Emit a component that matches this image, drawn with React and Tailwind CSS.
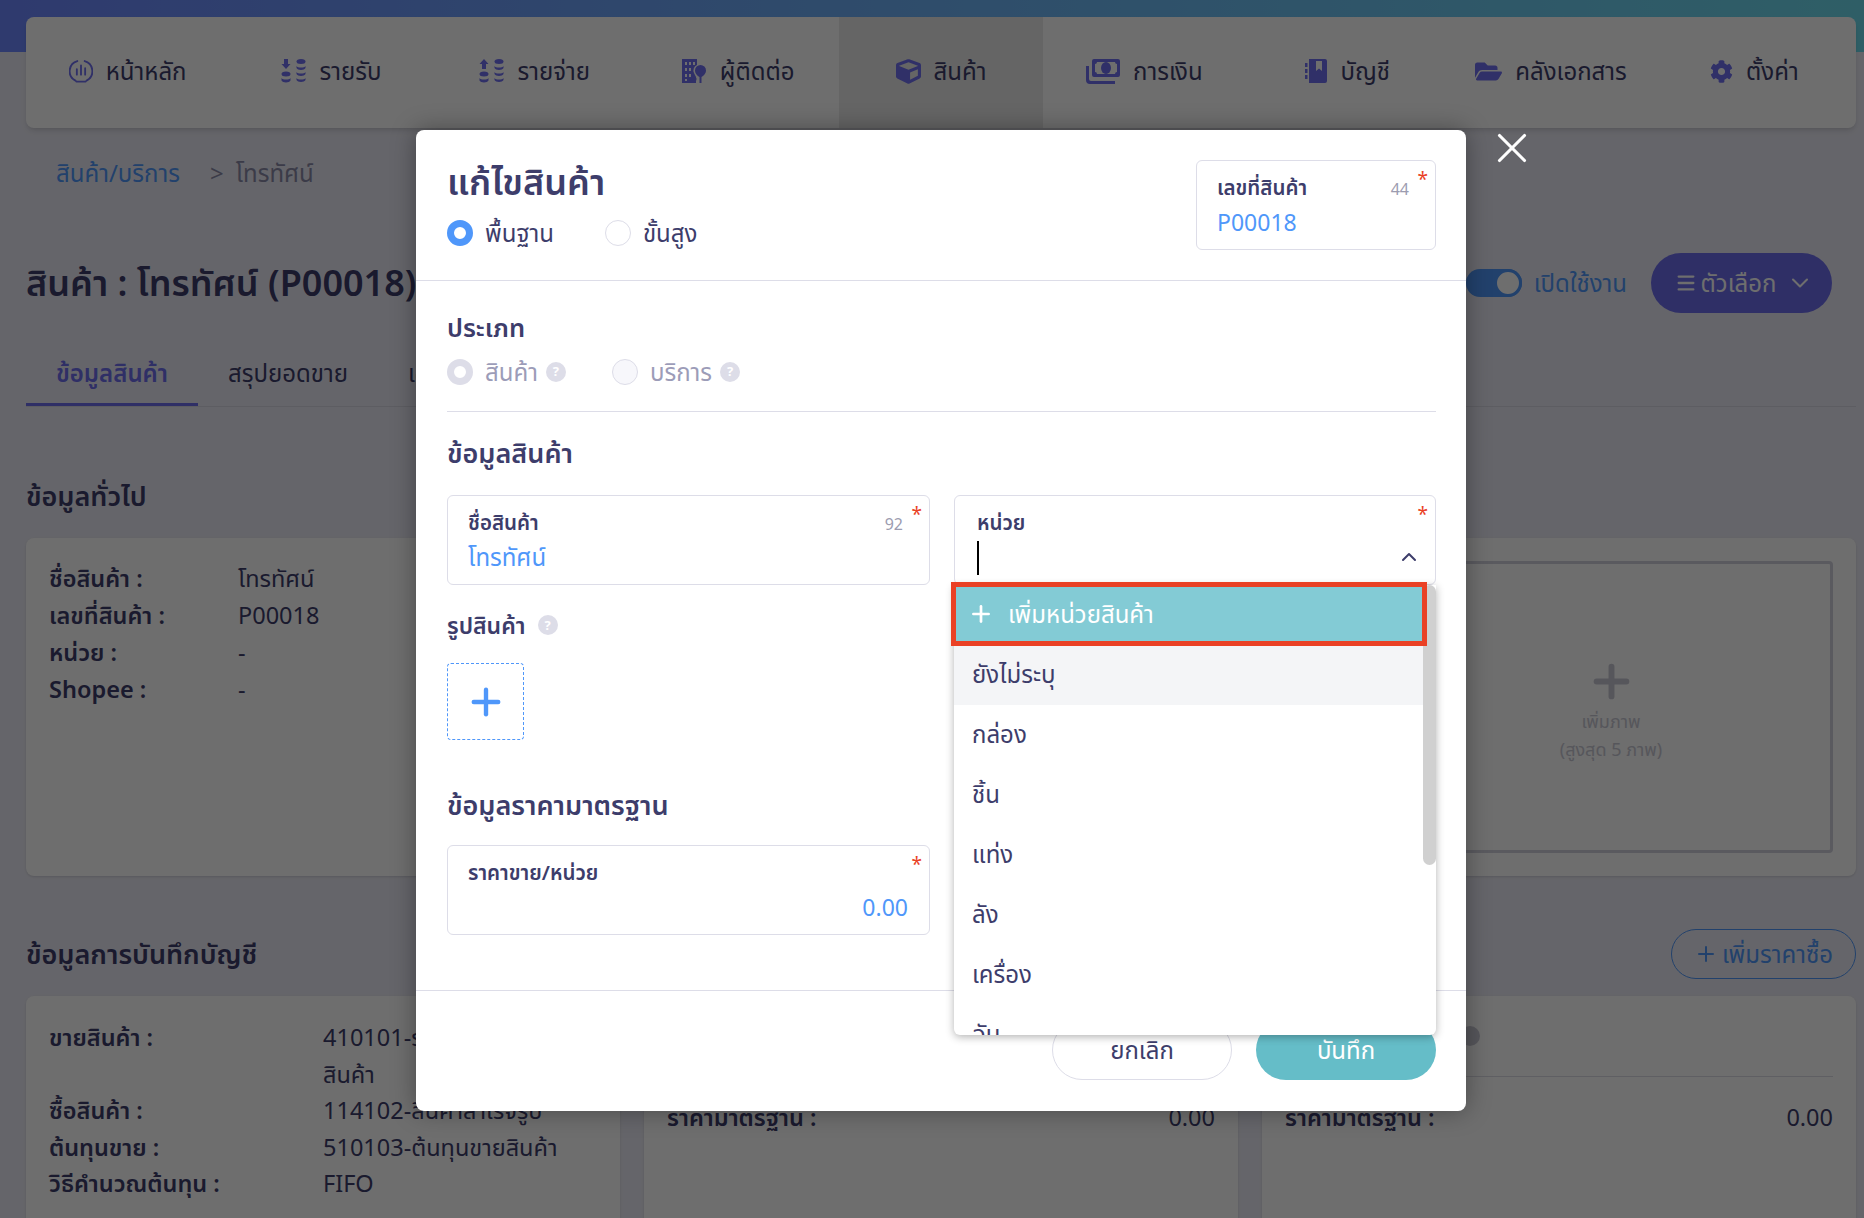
import React from 'react';
import { ChevronDown, ChevronUp, Plus, X, Menu } from 'lucide-react';
import { FaCube, FaCog, FaFolderOpen } from 'react-icons/fa';

const FONT = "font-['Noto_Sans','Noto_Sans_Thai',Inter,sans-serif]";

function HomeIcon() {
  return (
    <svg width="24" height="26" viewBox="0 0 26 26" fill="none" stroke="currentColor" strokeWidth="2" strokeLinecap="round">
      <path d="M7 23.5A11.5 11.5 0 0 1 9 2.2M17 2.2a11.5 11.5 0 0 1 2 21.3M8 24.5h10" />
      <path d="M8.5 11v6M13 7v10M17.5 10v7" />
    </svg>
  );
}

function CoinsIcon({ up }) {
  return (
    <svg width="26" height="26" viewBox="0 0 26 26" fill="currentColor">
      <path d={up ? 'M5 1l4.5 5H7v5H3V6H.5z' : 'M3 1h4v5h2.5L5 11 .5 6H3z'} />
      <ellipse cx="5" cy="16" rx="4.5" ry="2.5" />
      <path d="M.5 20c1 2 8 2 9 0v2.5c-1 2.5-8 2.5-9 0z" />
      <ellipse cx="20" cy="3.5" rx="4.5" ry="2.5" />
      <path d="M15.5 8c1 2 8 2 9 0v2c-1 2.5-8 2.5-9 0zM15.5 14c1 2 8 2 9 0v2c-1 2.5-8 2.5-9 0zM15.5 20c1 2 8 2 9 0v2c-1 2.5-8 2.5-9 0z" />
    </svg>
  );
}

function ContactIcon() {
  return (
    <svg width="26" height="26" viewBox="0 0 26 26" fill="currentColor">
      <path fillRule="evenodd" d="M1 1h15v6a6 6 0 0 0-3 8l2 4v6H1zM4 4v3h2V4zm4 0v3h2V4zm4 0v3h2V4zM4 10v3h2v-3zm4 0v3h2v-3zM4 16v3h2v-3zm4 0v3h2v-3zM4 21v2h2v-2z" />
      <path d="M19.5 7a5.5 5.5 0 0 1 5.5 5.5c0 3-2.5 5.5-4.500 6.500V25h-2v-6c-2-1-4.500-3.500-4.500-6.500A5.500 5.500 0 0 1 19.500 7z" />
      <circle cx="13" cy="21" r="2.500" />
    </svg>
  );
}

function MoneyIcon() {
  return (
    <svg width="34" height="26" viewBox="0 0 34 26" fill="currentColor">
      <path fillRule="evenodd" d="M8 1h24a2 2 0 0 1 2 2v14a2 2 0 0 1-2 2H8a2 2 0 0 1-2-2V3a2 2 0 0 1 2-2zm3 3a2 2 0 0 1-2 2v8a2 2 0 0 1 2 2h18a2 2 0 0 1 2-2V6a2 2 0 0 1-2-2z" />
      <ellipse cx="20" cy="10" rx="5" ry="6" />
      <path d="M0 8h3v13a2 2 0 0 0 2 2h24v3H4a4 4 0 0 1-4-4z" />
    </svg>
  );
}

function BookIcon() {
  return (
    <svg width="22" height="26" viewBox="0 0 22 26" fill="currentColor">
      <path fillRule="evenodd" d="M4 1h16a2 2 0 0 1 2 2v20a2 2 0 0 1-2 2H4zm7 2v10l3-2.500 3 2.500V3z" />
      <path d="M0 5h2.500v4H0zM0 11h2.500v4H0zM0 17h2.500v4H0z" />
    </svg>
  );
}

const NAV = [
  { label: 'หน้าหลัก', icon: <HomeIcon /> },
  { label: 'รายรับ', icon: <CoinsIcon /> },
  { label: 'รายจ่าย', icon: <CoinsIcon up /> },
  { label: 'ผู้ติดต่อ', icon: <ContactIcon /> },
  { label: 'สินค้า', icon: <FaCube size={25} />, active: true },
  { label: 'การเงิน', icon: <MoneyIcon /> },
  { label: 'บัญชี', icon: <BookIcon /> },
  { label: 'คลังเอกสาร', icon: <FaFolderOpen size={27} /> },
  { label: 'ตั้งค่า', icon: <FaCog size={23} /> },
];

const UNITS = ['กล่อง', 'ชิ้น', 'แท่ง', 'ลัง', 'เครื่อง', 'อัน'];

function Info({ rows, labelWidth, leading = 'leading-[37px]' }) {
  return (
    <div className={`text-[23.5px] ${leading}`}>
      {rows.map(([label, value]) => (
        <div key={label} className="flex">
          <div className="font-semibold shrink-0 text-[#3d3d6b]" style={{ width: labelWidth }}>{label}</div>
          <div className="text-[#3d3d6b]">{value}</div>
        </div>
      ))}
    </div>
  );
}

function Help({ className = '' }) {
  return (
    <span className={`inline-flex w-5 h-5 rounded-full bg-[#dddde8] text-white text-[13px] font-bold items-center justify-center ${className}`}>?</span>
  );
}

function Radio({ checked, disabled, label, help, className = '' }) {
  let ring = 'border border-[#dddde8] bg-white';
  if (checked) ring = 'border-[7px] border-[#4f97fa] bg-white';
  if (checked && disabled) ring = 'border-[7px] border-[#dddde8] bg-white';
  if (!checked && disabled) ring = 'border border-[#dddde8] bg-[#f7f7fb]';
  return (
    <div className={`flex items-center ${className}`}>
      <span className={`w-[26px] h-[26px] rounded-full ${ring}`} />
      <span className={`ml-3 text-[24px] leading-8 ${disabled ? 'text-[#9c9cb8]' : 'text-[#3d3d6b]'}`}>{label}</span>
      {help && <Help className="ml-2" />}
    </div>
  );
}

function Star() {
  return <span className="absolute top-[6px] right-[7px] text-[#ea4125] text-[19px] leading-6">*</span>;
}

function Field({ label, count, pad = 'px-5', className = '', children }) {
  return (
    <div className={`relative h-[90px] border border-[#dddde8] rounded-md pt-[14px] ${pad} ${className}`}>
      <Star />
      {count && <span className="absolute top-[16px] right-[26px] text-[16px] leading-6 text-[#9c9cb0]">{count}</span>}
      <div className="text-[20.5px] leading-6 font-semibold text-[#3d3d6b]">{label}</div>
      {children}
    </div>
  );
}

function Page() {
  return (
    <div className="h-full bg-[#ebebf5] text-[#3d3d6b]">
      <div className="h-[52px] bg-gradient-to-r from-[#6d87ff] to-[#6ddbed]" />
      <div className="ml-[26px] mr-[8px]">
        <div className="-mt-[35px] h-[111px] bg-white rounded-lg shadow-md grid grid-cols-9 overflow-hidden">
          {NAV.map(item => (
            <div key={item.label} className={`flex justify-center items-start pt-[38px] gap-[13px] ${item.active ? 'bg-[#e9e9e9]' : ''}`}>
              <span className="text-[#7070f0] h-[32px] flex items-center">{item.icon}</span>
              <span className="text-[24px] leading-8 whitespace-nowrap">{item.label}</span>
            </div>
          ))}
        </div>

        <div className="mt-[30px] pl-[30px] text-[24px] leading-[30px] flex">
          <span className="text-[#4f97fa]">สินค้า/บริการ</span>
          <span className="ml-[30px] text-[#8a8aa8]">{'>'}</span>
          <span className="ml-[12px] text-[#8a8aa8]">โทรทัศน์</span>
        </div>

        <div className="mt-[65px] h-[60px] flex items-center">
          <h1 className="text-[36px] font-semibold">สินค้า : โทรทัศน์ (P00018)</h1>
          <div className="ml-auto mr-[24px] flex items-center">
            <span className="w-[56px] h-[28px] rounded-full bg-[#4f97fa] flex justify-end">
              <span className="w-[28px] h-[28px] rounded-full bg-white border-[3px] border-[#4f97fa]" />
            </span>
            <span className="ml-3 text-[24px] text-[#4f97fa]">เปิดใช้งาน</span>
            <button className="ml-[24px] w-[181px] h-[60px] rounded-full bg-[#6d6ded] text-white text-[24px] flex items-center justify-center gap-1">
              <Menu size={22} strokeWidth={2.5} /> ตัวเลือก <ChevronDown size={28} strokeWidth={1.8} className="ml-[6px] -mr-[6px]" />
            </button>
          </div>
        </div>

        <div className="mt-[28px] h-[66px] border-b border-[#d8d8e4] flex text-[24px]">
          <div className="px-[30px] pt-[14px] font-semibold text-[#6d6ded] border-b-[3px] border-[#6d6ded]">ข้อมูลสินค้า</div>
          <div className="px-[30px] pt-[14px]">สรุปยอดขาย</div>
          <div className="px-[30px] pt-[14px]">เอกสาร</div>
        </div>

        <h2 className="mt-[72px] text-[27px] leading-[34px] font-semibold">ข้อมูลทั่วไป</h2>
        <div className="mt-[25px] h-[338px] flex gap-6">
          <div className="flex-1 bg-white rounded-lg shadow px-[23px] pt-[22px]">
            <Info
              labelWidth={189}
              rows={[['ชื่อสินค้า :', 'โทรทัศน์'], ['เลขที่สินค้า :', 'P00018'], ['หน่วย :', '-'], ['Shopee :', '-']]}
            />
          </div>
          <div className="w-[490px] bg-white rounded-lg shadow p-[23px]">
            <div className="h-full border-[3px] border-[#d0d0dc] rounded flex flex-col items-center justify-center pt-[5px] text-[#c8c8d4]">
              <Plus size={51} strokeWidth={2.8} />
              <div className="text-[18px] leading-7">เพิ่มภาพ</div>
              <div className="text-[18px] leading-7">(สูงสุด 5 ภาพ)</div>
            </div>
          </div>
        </div>

        <div className="mt-[53px] h-[50px] flex items-center justify-between">
          <h2 className="text-[27px] font-semibold">ข้อมูลการบันทึกบัญชี</h2>
          <button className="w-[185px] h-[50px] rounded-full border border-[#4f97fa] text-[#4f97fa] text-[24px] flex items-center justify-center gap-1">
            <Plus size={24} /> เพิ่มราคาซื้อ
          </button>
        </div>
        <div className="mt-[17px] grid grid-cols-3 gap-6">
          <div className="h-[300px] bg-white rounded-lg shadow px-[23px] pt-[23px]">
            <Info
              labelWidth={274}
              leading="leading-[36.6px]"
              rows={[
                ['ขายสินค้า :', <>410101-รายได้จากการขาย<br />สินค้า</>],
                ['ซื้อสินค้า :', '114102-สินค้าสำเร็จรูป'],
                ['ต้นทุนขาย :', '510103-ต้นทุนขายสินค้า'],
                ['วิธีคำนวณต้นทุน :', 'FIFO'],
              ]}
            />
          </div>
          {['ราคาขาย', 'ราคาซื้อ'].map(title => (
            <div key={title} className="h-[300px] bg-white rounded-lg shadow px-[23px]">
              <div className="h-[81px] border-b border-[#dcdce6] flex items-center">
                <span className="w-[175px] text-[22px] font-semibold">{title}</span>
                <span className="w-5 h-5 rounded-full bg-[#c8c8d4]" />
              </div>
              <div className="mt-[22px] flex justify-between text-[23.5px] leading-[37px]">
                <span className="font-semibold">ราคามาตรฐาน :</span>
                <span>0.00</span>
              </div>
            </div>
          ))}
        </div>
      </div>
    </div>
  );
}

function UnitDropdown() {
  return (
    <div className="absolute left-[538px] top-[455px] w-[482px] h-[450px] text-[24px] text-[#3d3d6b]">
      <div className="h-full bg-white rounded-b-md shadow-[0_2px_8px_rgba(0,0,0,0.3)] overflow-hidden relative">
        <div className="absolute right-0 top-0 w-[13px] h-[280px] rounded-full bg-[#d0d0d0]" />
        <div className="h-[60px]" />
        <div className="w-[469px] h-[60px] bg-[#f4f5f7] pl-[18px] pb-[2px] flex items-center">ยังไม่ระบุ</div>
        {UNITS.map(unit => (
          <div key={unit} className="w-[469px] h-[60px] pl-[18px] pb-[2px] flex items-center">{unit}</div>
        ))}
      </div>
      <div className="absolute -left-[3px] -top-[3px] w-[476px] h-[64px] border-[5px] border-[#ea4125] bg-[#83cbd5] text-white flex items-center pl-[12px] gap-[14px]">
        <Plus size={26} strokeWidth={2.5} />
        <span>เพิ่มหน่วยสินค้า</span>
      </div>
    </div>
  );
}

function Modal() {
  return (
    <div className="absolute left-[416px] top-[130px] w-[1050px] h-[981px] bg-white rounded-lg shadow-[0_0_24px_rgba(0,0,0,0.35)] text-[#3d3d6b]">
      <div className="h-[151px] pl-[31px] pr-[30px] border-b border-[#dddde8] flex justify-between">
        <div className="pt-[20px]">
          <h2 className="text-[36px] leading-[64px] font-semibold">แก้ไขสินค้า</h2>
          <div className="mt-[3px] flex">
            <Radio checked label="พื้นฐาน" />
            <Radio label="ขั้นสูง" className="ml-[51px]" />
          </div>
        </div>
        <Field label="เลขที่สินค้า" count="44" className="mt-[30px] w-[240px] text-left">
          <div className="mt-[7px] text-[23px] leading-8 text-[#4f97fa]">P00018</div>
        </Field>
      </div>

      <div className="ml-[31px] mr-[30px] h-[131px] border-b border-[#dddde8]">
        <h3 className="pt-[26px] text-[25.5px] leading-[40px] font-semibold">ประเภท</h3>
        <div className="mt-[9px] flex">
          <Radio checked disabled help label="สินค้า" />
          <Radio disabled help label="บริการ" className="ml-[46px]" />
        </div>
      </div>

      <div className="pl-[31px] pr-[30px]">
        <h3 className="mt-[21px] text-[27px] leading-[40px] font-semibold">ข้อมูลสินค้า</h3>
        <div className="mt-[22px] flex gap-6">
          <div className="w-[483px]">
            <Field label="ชื่อสินค้า" count="92">
              <div className="mt-[7px] text-[24px] leading-8 text-[#4f97fa]">โทรทัศน์</div>
            </Field>
            <div className="mt-[24px] flex items-center text-[23px] leading-8 font-semibold">
              รูปสินค้า <Help className="ml-3" />
            </div>
            <div className="mt-[22px] w-[77px] h-[77px] border border-dashed border-[#4f97fa] rounded flex items-center justify-center text-[#4f97fa]">
              <Plus size={42} strokeWidth={2.5} />
            </div>
            <h3 className="mt-[45px] text-[27px] leading-[40px] font-semibold">ข้อมูลราคามาตรฐาน</h3>
            <Field label="ราคาขาย/หน่วย" pad="pl-5 pr-[21px]" className="mt-[20px]">
              <div className="mt-[7px] text-right text-[23px] leading-8 text-[#4f97fa]">0.00</div>
            </Field>
          </div>
          <Field label="หน่วย" pad="pl-[22px] pr-5" className="w-[482px]">
            <div className="mt-[7px] flex items-center justify-between">
              <span className="w-[2px] h-[34px] bg-black" />
              <ChevronUp size={24} className="-mr-[6px] -mt-[2px]" />
            </div>
          </Field>
        </div>
      </div>

      <div className="absolute left-0 right-0 top-[860px] h-[121px] border-t border-[#dddde8] pl-[31px] pr-[30px] pt-[29px] flex justify-end gap-6">
        <button className="w-[180px] h-[60px] rounded-full border border-[#dddde8] text-[24px]">ยกเลิก</button>
        <button className="w-[180px] h-[60px] rounded-full bg-[#65bdc8] text-white text-[24px]">บันทึก</button>
      </div>

      <UnitDropdown />
    </div>
  );
}

export default function App() {
  return (
    <div className={`relative w-[1864px] h-[1218px] overflow-hidden ${FONT}`}>
      <Page />
      <div className="absolute inset-0 bg-black/[0.57]" />
      <Modal />
      <X size={50} strokeWidth={1.5} className="absolute left-[1487px] top-[123px] text-white" />
    </div>
  );
}
